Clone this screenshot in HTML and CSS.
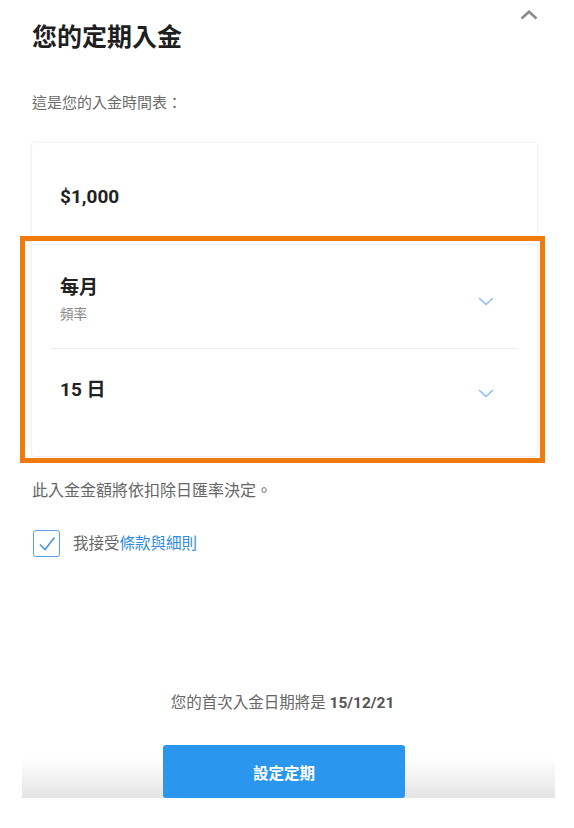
FILE: index.html
```html
<!DOCTYPE html>
<html lang="zh-Hant">
<head>
<meta charset="utf-8">
<title>您的定期入金</title>
<link rel="stylesheet" href="styles.css">
</head>
<body>
<div class="page">
  <header class="header">
    <h1 class="title">您的定期入金</h1>
    <button class="collapse" aria-label="收起">
      <svg width="18" height="10" viewBox="0 0 18 10"><path d="M1.5 8.5 L9 1.8 L16.5 8.5" fill="none" stroke="#8a8a8a" stroke-width="2.6"/></svg>
    </button>
  </header>

  <p class="subtitle">這是您的入金時間表：</p>

  <div class="card-wrap">
    <div class="card">
      <div class="row row-amount">
        <span class="value">$1,000</span>
      </div>
      <div class="row row-select">
        <div class="field">
          <span class="value">每月</span>
          <span class="label">頻率</span>
        </div>
        <svg class="chev" width="16" height="9" viewBox="0 0 16 9"><path d="M1 1 L8 7.5 L15 1" fill="none" stroke="#8dbdf0" stroke-width="1.6"/></svg>
      </div>
      <div class="divider"></div>
      <div class="row row-select row-day">
        <div class="field">
          <span class="value">15 日</span>
        </div>
        <svg class="chev" width="16" height="9" viewBox="0 0 16 9"><path d="M1 1 L8 7.5 L15 1" fill="none" stroke="#8dbdf0" stroke-width="1.6"/></svg>
      </div>
    </div>
    <div class="highlight"></div>
  </div>

  <p class="note">此入金金額將依扣除日匯率決定。</p>

  <label class="agree">
    <span class="checkbox">
      <svg width="18" height="16" viewBox="0 0 18 16"><path d="M2 8.5 L7 13.5 L16.5 1.5" fill="none" stroke="#4a94e0" stroke-width="1.6"/></svg>
    </span>
    <span class="agree-text">我接受<a class="link" href="#">條款與細則</a></span>
  </label>

  <div class="spacer"></div>

  <p class="first-date">您的首次入金日期將是 <b>15/12/21</b></p>

  <div class="footer-bar">
    <button class="submit">設定定期</button>
  </div>
</div>
</body>
</html>
```

FILE: styles.css
```css
* { box-sizing: border-box; }
html, body {
  margin: 0;
  padding: 0;
  background: #fff;
}
body {
  font-family: Roboto, "Noto Sans CJK TC", "Noto Sans", sans-serif;
  color: #222;
}
.page {
  width: 574px;
  height: 828px;
  display: flex;
  flex-direction: column;
  padding-top: 9px;
}
.header {
  display: flex;
  justify-content: space-between;
  align-items: flex-start;
  padding: 0 36px 0 32px;
}
.title {
  margin: 13px 0 0 0;
  font-size: 25px;
  line-height: 32px;
  font-weight: 700;
  color: #1f1f1f;
}
.collapse {
  border: 0;
  background: none;
  padding: 0;
  margin: 1px 0 0 0;
  width: 18px;
  height: 10px;
  display: block;
}
.collapse svg { display: block; }
.subtitle {
  margin: 38px 0 0 32px;
  font-size: 15px;
  line-height: 22px;
  color: #6b6b6b;
}
.card-wrap {
  position: relative;
  margin: 29px 37px 0 32px;
}
.card {
  background: #fff;
  border-radius: 3px;
  box-shadow: 0 0 4px rgba(0,0,0,0.09), 0 1px 2px rgba(0,0,0,0.05);
}
.row {
  display: flex;
  align-items: center;
  justify-content: space-between;
  padding: 0 43px 0 28px;
}
.row-amount {
  height: 102px;
  border-bottom: 1px solid #f0f0f0;
  padding-top: 7px;
}
.row-select {
  height: 103px;
  align-items: flex-start;
  padding-top: 31px;
}
.row-select .chev { margin-top: 21px; }
.row-day {
  height: 107px;
  padding-top: 29px;
}
.row-day .chev { margin-top: 11px; }
.field {
  display: flex;
  flex-direction: column;
}
.value {
  font-size: 19px;
  line-height: 24px;
  font-weight: 700;
  color: #222;
}
.label {
  font-size: 13.5px;
  line-height: 28px;
  color: #8a8a8a;
}
.chev { display: block; }
.divider {
  height: 1px;
  background: #ececec;
  margin: 0 19px;
}
.highlight {
  position: absolute;
  left: -12px;
  top: 93px;
  width: 525px;
  height: 227px;
  border: 5px solid #ef7b0c;
  pointer-events: none;
}
.note {
  margin: 24px 0 0 32px;
  font-size: 16px;
  line-height: 22px;
  color: #666;
}
.agree {
  display: flex;
  align-items: center;
  margin: 28px 0 0 33px;
}
.checkbox {
  width: 27px;
  height: 27px;
  border: 1.5px solid #5a9fe6;
  border-radius: 3px;
  display: flex;
  align-items: center;
  justify-content: center;
}
.checkbox svg { display: block; }
.agree-text {
  margin-left: 13px;
  font-size: 15.5px;
  line-height: 22px;
  color: #666;
}
.link {
  color: #2f8be6;
  text-decoration: none;
}
.spacer { flex: 1; }
.first-date {
  margin: 0;
  text-align: center;
  font-size: 15.5px;
  line-height: 22px;
  color: #666;
  padding-right: 9px;
}
.first-date b { font-weight: 700; color: #555; }
.footer-bar {
  margin: 31px 19px 30px 22px;
  height: 53px;
  display: flex;
  justify-content: center;
  background: linear-gradient(to bottom, rgba(255,255,255,0) 0, #fff 13px, #f4f4f4 30px, #e4e4e4 100%);
}
.submit {
  width: 242px;
  height: 53px;
  margin-right: 9px;
  border: 0;
  border-radius: 3px;
  background: #2b96ee;
  color: #fff;
  font-family: Roboto, "Noto Sans CJK TC", sans-serif;
  font-size: 15.5px;
  font-weight: 700;
}
```
